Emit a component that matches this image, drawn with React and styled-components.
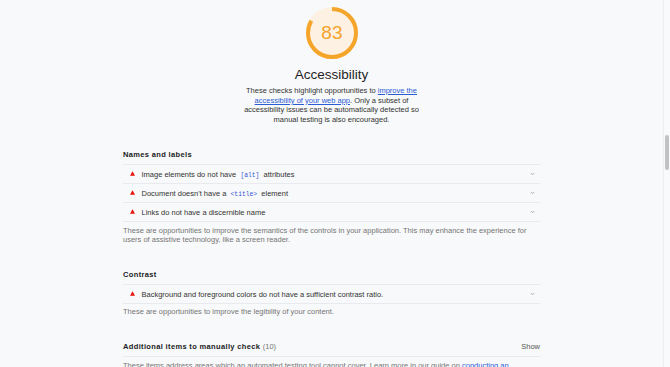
import React from "react";
import styled, { createGlobalStyle } from "styled-components";

const Global = createGlobalStyle`
  html, body { margin: 0; padding: 0; }
  body {
    background: #f8f9fa;
    font-family: "Liberation Sans", Arial, sans-serif;
    overflow: hidden;
  }
`;

const Page = styled.div`
  display: flex;
  height: 367px;
  overflow: hidden;
  background: #f8f9fa;
`;

const Main = styled.main`
  flex: 1;
  display: flex;
  justify-content: center;
`;

const Report = styled.div`
  width: 417px;
  display: flex;
  flex-direction: column;
`;

const ScoreHeader = styled.header`
  display: flex;
  flex-direction: column;
  align-items: center;
`;

const Gauge = styled.div`
  margin-top: 7px;
  width: 52px;
  height: 52px;
  display: grid;
  place-items: center;
  & > * { grid-area: 1 / 1; }
`;

const GaugeValue = styled.span`
  font-size: 19px;
  line-height: 20px;
  color: #f5a32a;
  letter-spacing: 0.3px;
  padding-left: 1px;
`;

const Title = styled.h1`
  margin: 8px 0 0;
  font-size: 13.5px;
  line-height: 16px;
  font-weight: 400;
  color: #1f1f1f;
`;

const Intro = styled.p`
  margin: 3px 0 0;
  width: 182px;
  text-align: center;
  font-size: 7.5px;
  line-height: 9.7px;
  color: #333;
`;

const Link = styled.a`
  color: #2c5bd6;
  text-decoration: underline;
`;

const PlainLink = styled.a`
  color: #2c5bd6;
  text-decoration: none;
`;

const Group = styled.section`
  margin-top: 25px;
`;

const GroupHeader = styled.div`
  display: flex;
  justify-content: space-between;
  align-items: center;
  padding-bottom: 4.5px;
  border-bottom: ${(p) => (p.$ruled ? "1px solid #e8eaed" : "none")};
`;

const GroupTitle = styled.h2`
  margin: 0;
  font-size: 7.5px;
  line-height: 9.6px;
  font-weight: 700;
  letter-spacing: 0.35px;
  color: #202124;
`;

const Count = styled.span`
  font-weight: 400;
  letter-spacing: 0;
  color: #757575;
`;

const Toggle = styled.span`
  font-size: 7.5px;
  line-height: 9.6px;
  color: #555;
`;

const List = styled.div`
  border-bottom: 1px solid #e8eaed;
`;

const Row = styled.div`
  box-sizing: border-box;
  height: 19px;
  display: flex;
  align-items: center;
  padding: 0 5px 0 7px;
  border-top: 1px solid #e8eaed;
  font-size: 7.5px;
  color: #333;
`;

const RowText = styled.span`
  flex: 1;
  margin-left: 6.5px;
  padding-top: 1px;
`;

const Code = styled.code`
  font-family: "Liberation Mono", "DejaVu Sans Mono", monospace;
  font-size: 6.3px;
  color: #3556d8;
  padding: 0 2.2px;
`;

const Desc = styled.p`
  margin: 3.7px 0 0;
  font-size: 7.5px;
  line-height: 9.5px;
  color: #757575;
`;

const ScrollTrack = styled.div`
  width: 6px;
  border-left: 1px solid #eceef0;
  background: #f9fafb;
  padding-top: 135px;
  display: flex;
  justify-content: center;
`;

const Thumb = styled.div`
  width: 3.5px;
  height: 35px;
  border-radius: 2px;
  background: #c2c2c2;
`;

const FailIcon = () => (
  <svg width="5" height="5" viewBox="0 0 10 10">
    <polygon points="5,0.5 10,9.5 0,9.5" fill="#e8120c" />
  </svg>
);

const Chevron = () => (
  <svg width="5" height="4" viewBox="0 0 10 8">
    <polyline
      points="1.5,2 5,5.5 8.5,2"
      fill="none"
      stroke="#9a9a9a"
      strokeWidth="1.6"
    />
  </svg>
);

const Audit = ({ children }) => (
  <Row>
    <FailIcon />
    <RowText>{children}</RowText>
    <Chevron />
  </Row>
);

const ScoreGauge = ({ score }) => {
  const r = 24;
  const c = 2 * Math.PI * r;
  return (
    <Gauge>
      <svg width="52" height="52" viewBox="0 0 52 52">
        <circle cx="26" cy="26" r={r} fill="#fcf1e2" stroke="#fcf1e2" strokeWidth="4" />
        <circle
          cx="26"
          cy="26"
          r={r}
          fill="none"
          stroke="#f6a52b"
          strokeWidth="4"
          strokeDasharray={`${(score / 100) * c} ${c}`}
          transform="rotate(-90 26 26)"
        />
      </svg>
      <GaugeValue>{score}</GaugeValue>
    </Gauge>
  );
};

export default function App() {
  return (
    <>
      <Global />
      <Page>
        <Main>
          <Report>
            <ScoreHeader>
              <ScoreGauge score={83} />
              <Title>Accessibility</Title>
              <Intro>
                These checks highlight opportunities to{" "}
                <Link href="#">improve the accessibility of your web app</Link>. Only a
                subset of accessibility issues can be automatically detected so manual
                testing is also encouraged.
              </Intro>
            </ScoreHeader>

            <Group>
              <GroupHeader>
                <GroupTitle>Names and labels</GroupTitle>
              </GroupHeader>
              <List>
                <Audit>
                  Image elements do not have <Code>[alt]</Code> attributes
                </Audit>
                <Audit>
                  Document doesn't have a <Code>&lt;title&gt;</Code> element
                </Audit>
                <Audit>Links do not have a discernible name</Audit>
              </List>
              <Desc>
                These are opportunities to improve the semantics of the controls in your
                application. This may enhance the experience for users of assistive
                technology, like a screen reader.
              </Desc>
            </Group>

            <Group>
              <GroupHeader>
                <GroupTitle>Contrast</GroupTitle>
              </GroupHeader>
              <List>
                <Audit>
                  Background and foreground colors do not have a sufficient contrast ratio.
                </Audit>
              </List>
              <Desc>These are opportunities to improve the legibility of your content.</Desc>
            </Group>

            <Group>
              <GroupHeader $ruled>
                <GroupTitle>
                  Additional items to manually check <Count>(10)</Count>
                </GroupTitle>
                <Toggle>Show</Toggle>
              </GroupHeader>
              <Desc>
                These items address areas which an automated testing tool cannot cover.
                Learn more in our guide on{" "}
                <PlainLink href="#">conducting an accessibility review</PlainLink>.
              </Desc>
            </Group>
          </Report>
        </Main>
        <ScrollTrack>
          <Thumb />
        </ScrollTrack>
      </Page>
    </>
  );
}
